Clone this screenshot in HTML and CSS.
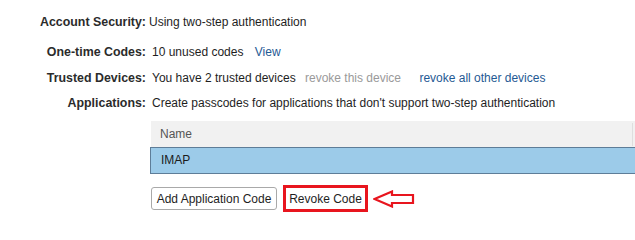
FILE: index.html
```html
<!DOCTYPE html>
<html>
<head>
<meta charset="utf-8">
<link rel="stylesheet" href="styles.css">
</head>
<body>
<div class="page">
  <div class="fields">
    <div class="row first">
      <div class="label">Account Security:</div>
      <div class="value">Using two-step authentication</div>
    </div>
    <div class="row second">
      <div class="label">One-time Codes:</div>
      <div class="value">10 unused codes <a class="link">View</a></div>
    </div>
    <div class="row third">
      <div class="label">Trusted Devices:</div>
      <div class="value">You have 2 trusted devices <span class="muted">revoke this device</span> <a class="link wide">revoke all other devices</a></div>
    </div>
    <div class="row fourth">
      <div class="label">Applications:</div>
      <div class="value">Create passcodes for applications that don't support two-step authentication</div>
    </div>
  </div>
  <div class="apps">
    <div class="table">
      <div class="thead">
        <div class="th name">Name</div>
        <div class="th rest"></div>
      </div>
      <div class="tr selected">
        <div class="td">IMAP</div>
      </div>
    </div>
    <div class="actions">
      <button class="btn">Add Application Code</button>
      <button class="btn revoke">Revoke Code</button>
      <svg class="arrow" width="42" height="18" viewBox="0 0 42 18">
        <polygon points="1.5,9 19,1.5 19,5 40,5 40,13 19,13 19,16.5" fill="#fff" stroke="#e8151e" stroke-width="2.2" stroke-linejoin="miter"/>
      </svg>
    </div>
  </div>
</div>
</body>
</html>
```

FILE: styles.css
```css
html, body {
  margin: 0;
  padding: 0;
  background: #fff;
  overflow: hidden;
}
.page {
  width: 635px;
  height: 229px;
  font-family: "Liberation Sans", Arial, sans-serif;
  font-size: 12px;
  color: #1e1e1e;
  padding-top: 14px;
  box-sizing: border-box;
}
.fields {
  display: flex;
  flex-direction: column;
}
.row {
  display: grid;
  grid-template-columns: 146px auto;
  column-gap: 6px;
  line-height: 16px;
  height: 16px;
  white-space: nowrap;
}
.row.first { margin-bottom: 14px; }
.row.second { margin-bottom: 10px; }
.row.third { margin-bottom: 9px; }
.row.first .value { margin-left: -3px; }
.label {
  text-align: right;
  font-weight: bold;
  font-size: 12.4px;
  color: #2b2b2b;
}
.link {
  color: #1f5a94;
  margin-left: 8px;
}
.link.wide { margin-left: 15px; }
.muted {
  color: #9a9a9a;
  margin-left: 6px;
}
.apps {
  margin-left: 151px;
  margin-top: 10px;
}
.table {
  width: 500px;
}
.thead {
  display: flex;
  height: 26px;
  background: #f1f1f1;
}
.th {
  color: #555;
}
.th.name {
  width: 472px;
  padding-left: 9px;
  border-right: 1px solid #dedede;
  margin: 2px 0 1px;
  line-height: 23px;
}
.tr.selected {
  height: 25px;
  background: #9ccbe9;
  border-top: 1px solid #5e7d98;
  border-bottom: 1px solid #5e7d98;
  border-left: 1px solid #5e7d98;
  margin-left: -1px;
}
.td {
  line-height: 25px;
  padding-left: 10px;
  color: #1b1b1b;
}
.actions {
  display: flex;
  align-items: center;
  margin-top: 11px;
}
.btn {
  font-family: "Liberation Sans", Arial, sans-serif;
  font-size: 12px;
  color: #1e1e1e;
  background: #fff;
  border: 1px solid #a9a9a9;
  border-radius: 3px;
  height: 23px;
  padding: 0;
  width: 126px;
  white-space: nowrap;
  box-sizing: border-box;
}
.btn.revoke {
  width: 85px;
  height: 27px;
  border: 3px solid #e8151e;
  border-radius: 0;
  margin-left: 6px;
}
.arrow {
  display: block;
  margin-left: 5px;
  margin-top: 1px;
}
```
